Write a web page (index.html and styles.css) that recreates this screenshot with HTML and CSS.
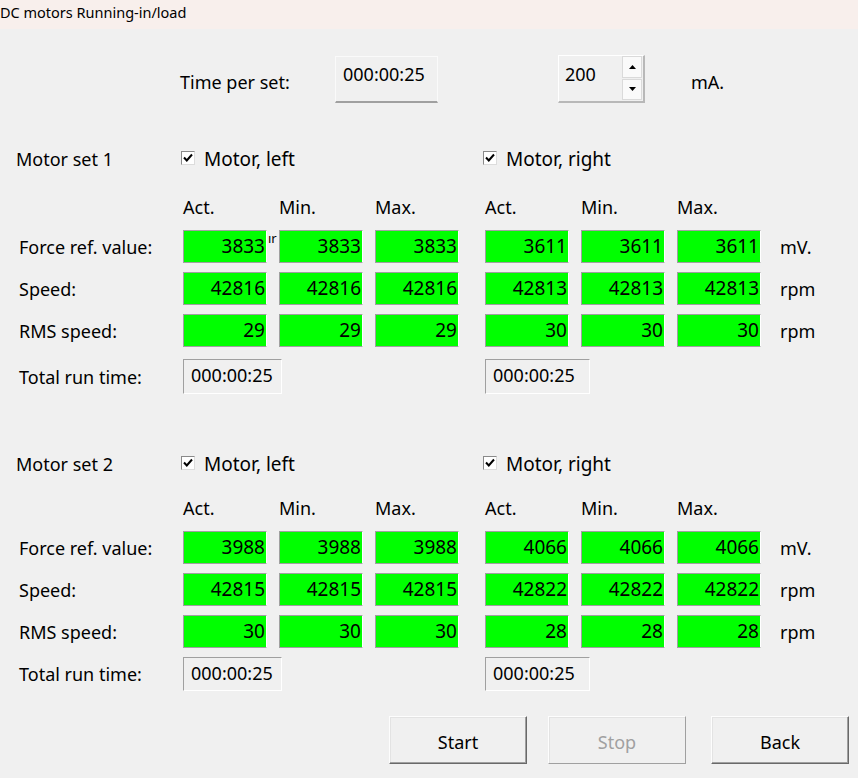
FILE: index.html
```html
<!DOCTYPE html>
<html lang="en">
<head>
  <meta charset="UTF-8">
  <title>DC motors Running-in/load</title>
  <link rel="stylesheet" href="styles.css">
</head>
<body>
  <div class="titlebar">DC motors Running-in/load</div>

  <main class="window">
    <div class="settings">
      <span class="settings-label">Time per set:</span>
      <div class="edit time-edit">000:00:25</div>
      <div class="spin">
        <span class="spin-value">200</span>
        <span class="spin-buttons">
          <span class="spin-btn"><svg width="7" height="4" viewBox="0 0 7 4"><path d="M3.5 0L7 4H0z" fill="#000"/></svg></span>
          <span class="spin-btn"><svg width="7" height="4" viewBox="0 0 7 4"><path d="M0 0H7L3.5 4z" fill="#000"/></svg></span>
        </span>
      </div>
      <span class="unit-ma">mA.</span>
    </div>

    <section class="set">
      <div class="grid set-head">
        <span>Motor set 1</span>
        <span class="check check-left"><span class="box"><svg width="10" height="9" viewBox="0 0 10 9"><path d="M1 4.5L3.8 7.5L9 1.5" stroke="#000" stroke-width="2" fill="none"/></svg></span>Motor, left</span>
        <span class="check check-right"><span class="box"><svg width="10" height="9" viewBox="0 0 10 9"><path d="M1 4.5L3.8 7.5L9 1.5" stroke="#000" stroke-width="2" fill="none"/></svg></span>Motor, right</span>
      </div>
      <div class="grid cols">
        <span></span><span>Act.</span><span>Min.</span><span>Max.</span>
        <span class="r">Act.</span><span>Min.</span><span>Max.</span>
      </div>
      <div class="grid row">
        <span class="row-label">Force ref. value:</span>
        <span class="val">3833<span class="stray">ır</span></span><span class="val">3833</span><span class="val">3833</span>
        <span class="val r">3611</span><span class="val">3611</span><span class="val">3611</span>
        <span class="unit">mV.</span>
      </div>
      <div class="grid row">
        <span class="row-label">Speed:</span>
        <span class="val">42816</span><span class="val">42816</span><span class="val">42816</span>
        <span class="val r">42813</span><span class="val">42813</span><span class="val">42813</span>
        <span class="unit">rpm</span>
      </div>
      <div class="grid row">
        <span class="row-label">RMS speed:</span>
        <span class="val">29</span><span class="val">29</span><span class="val">29</span>
        <span class="val r">30</span><span class="val">30</span><span class="val">30</span>
        <span class="unit">rpm</span>
      </div>
      <div class="grid total">
        <span class="row-label">Total run time:</span>
        <span class="runtime runtime-left">000:00:25</span>
        <span class="runtime runtime-right">000:00:25</span>
      </div>
    </section>

    <section class="set set-second">
      <div class="grid set-head">
        <span>Motor set 2</span>
        <span class="check check-left"><span class="box"><svg width="10" height="9" viewBox="0 0 10 9"><path d="M1 4.5L3.8 7.5L9 1.5" stroke="#000" stroke-width="2" fill="none"/></svg></span>Motor, left</span>
        <span class="check check-right"><span class="box"><svg width="10" height="9" viewBox="0 0 10 9"><path d="M1 4.5L3.8 7.5L9 1.5" stroke="#000" stroke-width="2" fill="none"/></svg></span>Motor, right</span>
      </div>
      <div class="grid cols">
        <span></span><span>Act.</span><span>Min.</span><span>Max.</span>
        <span class="r">Act.</span><span>Min.</span><span>Max.</span>
      </div>
      <div class="grid row">
        <span class="row-label">Force ref. value:</span>
        <span class="val">3988</span><span class="val">3988</span><span class="val">3988</span>
        <span class="val r">4066</span><span class="val">4066</span><span class="val">4066</span>
        <span class="unit">mV.</span>
      </div>
      <div class="grid row">
        <span class="row-label">Speed:</span>
        <span class="val">42815</span><span class="val">42815</span><span class="val">42815</span>
        <span class="val r">42822</span><span class="val">42822</span><span class="val">42822</span>
        <span class="unit">rpm</span>
      </div>
      <div class="grid row">
        <span class="row-label">RMS speed:</span>
        <span class="val">30</span><span class="val">30</span><span class="val">30</span>
        <span class="val r">28</span><span class="val">28</span><span class="val">28</span>
        <span class="unit">rpm</span>
      </div>
      <div class="grid total">
        <span class="row-label">Total run time:</span>
        <span class="runtime runtime-left">000:00:25</span>
        <span class="runtime runtime-right">000:00:25</span>
      </div>
    </section>

    <div class="actions">
      <button class="btn btn-start">Start</button>
      <button class="btn btn-stop" disabled>Stop</button>
      <button class="btn">Back</button>
    </div>
  </main>
</body>
</html>
```

FILE: styles.css
```css
* {
  margin: 0;
  padding: 0;
  box-sizing: border-box;
}

:root {
  --bg: #f0f0f0;
  --green: #00ff00;
  --edge: #a0a0a0;
  --dark-edge: #696969;
  --text: #000;
}

body {
  font-family: "Noto Sans", "Open Sans", sans-serif;
  font-size: 18px;
  color: var(--text);
  background-color: var(--bg);
  width: 858px;
  height: 778px;
  overflow: hidden;
}

.titlebar {
  height: 29px;
  background-color: #f8efec;
  font-size: 14.5px;
  line-height: 24px;
  white-space: nowrap;
}

/* top settings row */
.settings {
  display: flex;
  align-items: flex-start;
  padding-left: 180px;
  margin-top: 26px;
  height: 48px;
}

.settings-label {
  width: 155px;
  line-height: 24px;
  margin-top: 15px;
}

.edit {
  line-height: 24px;
  background-color: var(--bg);
}

.time-edit {
  width: 103px;
  height: 47px;
  margin-top: 1px;
  padding: 5px 7px;
  border: 1px solid #fafafa;
  border-bottom: 2px solid var(--edge);
}

.spin {
  display: flex;
  width: 87px;
  height: 48px;
  margin-left: 120px;
  border: 1px solid #fff;
  border-right: 2px solid #b8b8b8;
  border-bottom: 2px solid #b8b8b8;
}

.spin-value {
  flex: 1;
  line-height: 24px;
  padding: 6px 0 0 6px;
}

.spin-buttons {
  display: flex;
  flex-direction: column;
  gap: 1px;
  width: 20px;
  margin: 0 1px 1px 0;
}

.spin-btn {
  flex: 1;
  display: flex;
  align-items: center;
  justify-content: center;
  background-color: #fafafa;
  border: 1px solid #dadada;
}

.unit-ma {
  line-height: 24px;
  margin-top: 15px;
  margin-left: 46px;
}

/* motor sets */
.set {
  padding-left: 16px;
  margin-top: 43px;
}

.set-second {
  margin-top: 57px;
}

.grid {
  display: grid;
  grid-template-columns: 155px 84px 84px 84px 98px 84px 84px auto;
  column-gap: 12px;
  align-items: center;
}

.set-head {
  height: 24px;
}

.check {
  display: flex;
  align-items: center;
  gap: 9px;
  font-size: 19px;
}

.check-left {
  grid-column: 2 / span 3;
  margin-left: -2px;
}

.check-right {
  grid-column: 5 / -1;
  margin-left: 12px;
}

.box {
  display: flex;
  align-items: center;
  justify-content: center;
  width: 14px;
  height: 14px;
  margin-top: -3px;
  background-color: #fff;
  border: 1px solid #8a8a8a;
  border-right-color: #dcdcdc;
  border-bottom-color: #dcdcdc;
}

.cols {
  height: 24px;
  margin-top: 25px;
}

.set-second .cols {
  margin-top: 21px;
}

.r {
  margin-left: 14px;
}

.row {
  height: 33px;
  margin-top: 9px;
}

.cols + .row {
  margin-top: 11px;
}

.row-label {
  padding-left: 3px;
  white-space: nowrap;
}

.val {
  position: relative;
  height: 33px;
  line-height: 31px;
  font-size: 19px;
  text-align: right;
  padding-right: 1px;
  background-color: var(--green);
  border: 1px solid var(--edge);
  border-right-color: #fff;
  border-bottom-color: var(--edge);
}

/* stray label text peeking out between the first two boxes */
.stray {
  position: absolute;
  left: 84px;
  top: -1px;
  line-height: 16px;
  font-size: 13px;
}

.unit {
  padding-left: 7px;
}

.total {
  height: 35px;
  margin-top: 12px;
}

.set-second .total {
  height: 34px;
  margin-top: 9px;
}

.runtime {
  height: 100%;
  line-height: 31px;
  padding-left: 7px;
  border: 1px solid var(--edge);
  border-right-color: #fff;
  border-bottom-color: #fff;
  white-space: nowrap;
}

.runtime-left {
  grid-column: 2 / span 2;
  width: 99px;
}

.runtime-right {
  grid-column: 5 / span 2;
  width: 105px;
  margin-left: 14px;
}

/* bottom buttons */
.actions {
  display: flex;
  justify-content: flex-end;
  padding-right: 9px;
  margin-top: 25px;
}

.btn {
  width: 138px;
  height: 48px;
  padding-top: 3px;
  font-family: inherit;
  font-size: 18px;
  color: var(--text);
  background-color: var(--bg);
  border: 1px solid #fdfdfd;
  border-right-color: var(--dark-edge);
  border-bottom-color: var(--dark-edge);
  box-shadow: inset -1px -1px 0 var(--edge), inset 1px 1px 0 #e3e3e3;
}

.btn-start {
  margin-right: 21px;
}

.btn-stop {
  margin-right: 25px;
  color: var(--edge);
  border-right-color: var(--edge);
  border-bottom-color: var(--edge);
  box-shadow: inset 1px 1px 0 #e3e3e3;
}
```
